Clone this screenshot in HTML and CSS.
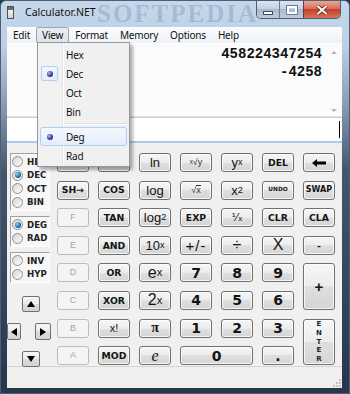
FILE: index.html
```html
<!DOCTYPE html>
<html lang="en">
<head>
    <meta charset="UTF-8">
    <title>Calculator.NET</title>
    <link rel="stylesheet" href="styles.css">
</head>
<body>
<div class="window">
    <div class="titlebar">
        <span class="app-icon"></span>
        <span class="title">Calculator.NET</span>
        <span class="watermark">SOFTPEDIA</span>
        <div class="caption">
            <span class="cap-btn cap-min"><i></i></span>
            <span class="cap-btn cap-max"><i></i></span>
            <span class="cap-btn cap-close">
                <svg width="12" height="10" viewBox="0 0 12 10"><path d="M1.5 1 L10.5 9 M10.5 1 L1.5 9" stroke="#5a2018" stroke-width="3.6"/><path d="M1.5 1 L10.5 9 M10.5 1 L1.5 9" stroke="#fff" stroke-width="2"/></svg>
            </span>
        </div>
    </div>

    <div class="client">
        <div class="menubar">
            <span class="menu-item">Edit</span>
            <span class="menu-item open">View</span>
            <span class="menu-item">Format</span>
            <span class="menu-item">Memory</span>
            <span class="menu-item">Options</span>
            <span class="menu-item">Help</span>
        </div>

        <!-- history / stack -->
        <div class="display">
            <div class="lines">
                <div>458224347254</div>
                <div>-4258</div>
            </div>
            <div class="scrollbar">
                <span class="sb-up"></span>
                <span class="sb-down"></span>
            </div>
        </div>

        <div class="entry"><span class="caret"></span></div>

        <div class="keypad">
            <div class="side">
                <div class="group">
                    <div class="radio"><span class="dot"></span>HEX</div>
                    <div class="radio"><span class="dot on"></span>DEC</div>
                    <div class="radio"><span class="dot"></span>OCT</div>
                    <div class="radio"><span class="dot"></span>BIN</div>
                </div>
                <div class="group">
                    <div class="radio"><span class="dot on"></span>DEG</div>
                    <div class="radio"><span class="dot"></span>RAD</div>
                </div>
                <div class="group">
                    <div class="radio"><span class="dot"></span>INV</div>
                    <div class="radio"><span class="dot"></span>HYP</div>
                </div>

                <div class="arrows">
                    <div class="arrow-row">
                        <button class="arrow arrow-v"><svg width="8" height="6"><polygon points="0,6 4,0 8,6" fill="#000"/></svg></button>
                    </div>
                    <div class="arrow-row arrow-mid">
                        <button class="arrow arrow-l"><svg width="6" height="8"><polygon points="6,0 0,4 6,8" fill="#000"/></svg></button>
                        <button class="arrow arrow-r"><svg width="6" height="8"><polygon points="0,0 6,4 0,8" fill="#000"/></svg></button>
                    </div>
                    <div class="arrow-row">
                        <button class="arrow arrow-v"><svg width="8" height="6"><polygon points="0,0 8,0 4,6" fill="#000"/></svg></button>
                    </div>
                </div>
            </div>

            <div class="keys">
                <!-- these two sit under the open menu -->
                <button class="key"></button>
                <button class="key"></button>
                <button class="key math">ln</button>
                <button class="key tiny-math"><sup>x</sup>&#8730;y</button>
                <button class="key math">y<sup>x</sup></button>
                <button class="key">DEL</button>
                <button class="key"><svg width="14" height="8"><polygon points="0,4 5,0 5,2.5 14,2.5 14,5.5 5,5.5 5,8" fill="#000"/></svg></button>

                <button class="key">SH&#8594;</button>
                <button class="key">COS</button>
                <button class="key math">log</button>
                <button class="key tiny-math">&#8730;<span class="over">x</span></button>
                <button class="key math">x<sup>2</sup></button>
                <button class="key undo">UNDO</button>
                <button class="key swap">SWAP</button>

                <button class="key off">F</button>
                <button class="key">TAN</button>
                <button class="key math">log<sub>2</sub></button>
                <button class="key">EXP</button>
                <button class="key frac">&#185;&#8260;&#8339;</button>
                <button class="key">CLR</button>
                <button class="key">CLA</button>

                <button class="key off">E</button>
                <button class="key">AND</button>
                <button class="key math">10<sup>x</sup></button>
                <button class="key sign">+/-</button>
                <button class="key op">&#247;</button>
                <button class="key op">X</button>
                <button class="key">-</button>

                <button class="key off">D</button>
                <button class="key">OR</button>
                <button class="key math big">e<sup>x</sup></button>
                <button class="key num">7</button>
                <button class="key num">8</button>
                <button class="key num">9</button>
                <button class="key plus">+</button>

                <button class="key off">C</button>
                <button class="key">XOR</button>
                <button class="key math big">2<sup>x</sup></button>
                <button class="key num">4</button>
                <button class="key num">5</button>
                <button class="key num">6</button>

                <button class="key off">B</button>
                <button class="key light">x!</button>
                <button class="key pi">&#960;</button>
                <button class="key num">1</button>
                <button class="key num">2</button>
                <button class="key num">3</button>
                <button class="key enter">E<br>N<br>T<br>E<br>R</button>

                <button class="key off">A</button>
                <button class="key">MOD</button>
                <button class="key euler">e</button>
                <button class="key num zero">0</button>
                <button class="key num">.</button>
            </div>
        </div>

        <div class="statusbar">
            <svg class="grip" width="9" height="9">
                <rect x="7" y="1" width="2" height="2" fill="#c4c4c4"/>
                <rect x="4" y="4" width="2" height="2" fill="#c4c4c4"/>
                <rect x="7" y="4" width="2" height="2" fill="#c4c4c4"/>
                <rect x="1" y="7" width="2" height="2" fill="#c4c4c4"/>
                <rect x="4" y="7" width="2" height="2" fill="#c4c4c4"/>
                <rect x="7" y="7" width="2" height="2" fill="#c4c4c4"/>
            </svg>
        </div>
    </div>

    <!-- open View menu -->
    <div class="dropdown">
        <div class="mi"><span class="chk"></span>Hex</div>
        <div class="mi"><span class="chk checked"><i></i></span>Dec</div>
        <div class="mi"><span class="chk"></span>Oct</div>
        <div class="mi"><span class="chk"></span>Bin</div>
        <div class="msep"></div>
        <div class="mi hot"><span class="chk"><i></i></span>Deg</div>
        <div class="mi"><span class="chk"></span>Rad</div>
    </div>
</div>
</body>
</html>
```

FILE: styles.css
```css
* {
    box-sizing: border-box;
}
body {
    margin: 0;
    width: 350px;
    height: 394px;
    overflow: hidden;
    background: #26354a;
    font-family: "Noto Sans", "Liberation Sans", sans-serif;
}
.window {
    position: relative;
    width: 350px;
    height: 394px;
    display: flex;
    flex-direction: column;
    padding: 0 7px 5px 6px;
    border: 1px solid #4d5f74;
    border-radius: 6px 6px 0 0;
    background: linear-gradient(#c6d7ea 0, #bccfe4 45px, #8d9fb4 100px, #44566b 170px, #27364a 394px);
}

/* title bar */
.titlebar {
    position: relative;
    height: 26px;
    display: flex;
    align-items: flex-start;
}
.app-icon {
    width: 7px;
    height: 13px;
    margin-top: 5px;
    border: 1px solid #505050;
    background: linear-gradient(#6b6b6b 0 3px, #f4f4f4 3px, #d0d0d0);
}
.title {
    margin: 4px 0 0 11px;
    font-size: 10.5px;
    color: #111;
}
.watermark {
    position: absolute;
    left: 90px;
    top: 0;
    font-family: "Liberation Serif", serif;
    font-weight: bold;
    font-size: 25px;
    line-height: 1;
    letter-spacing: 2px;
    color: rgba(60, 95, 140, 0.24);
}
.caption {
    position: relative;
    margin: 0 1px 0 auto;
    display: flex;
    border: 1px solid #4f5f73;
    border-top: none;
    border-radius: 0 0 5px 5px;
    overflow: hidden;
    height: 18px;
}
.cap-btn {
    display: flex;
    align-items: center;
    justify-content: center;
    width: 23px;
    background: linear-gradient(#dbe5f0, #c3d2e3 45%, #a9bbd0 50%, #bccbdc);
}
.cap-min {
    border-right: 1px solid #6a7a8e;
}
.cap-min i {
    width: 10px;
    height: 4px;
    margin-top: 6px;
    background: #fff;
    border: 1px solid #3f4c5c;
}
.cap-max i {
    width: 10px;
    height: 8px;
    border: 2px solid #fff;
    outline: 1px solid #6e7e92;
}
.cap-close {
    width: 37px;
    border-left: 1px solid #6b3a30;
    background: linear-gradient(#eaa796, #d8705a 45%, #c2412b 50%, #d8735d);
}

/* client area */
.client {
    flex: 1;
    display: flex;
    flex-direction: column;
    background: #f0f0f0;
}
.menubar {
    height: 16px;
    display: flex;
    background: linear-gradient(#fbfcfe, #eef2f8);
    font-size: 10px;
    letter-spacing: -0.2px;
}
.menu-item {
    padding: 0 5px;
    line-height: 15px;
    color: #111;
    border: 1px solid transparent;
}
.menu-item.open {
    border: 1px solid #9aa4b2;
    border-radius: 2px;
    background: linear-gradient(#e9edf2, #dfe4ea);
}
.display {
    height: 74px;
    display: flex;
    background: #fbfbfb;
}
.lines {
    flex: 1;
    padding: 2px 3px 0 0;
    text-align: right;
    font-family: "Liberation Mono", monospace;
    font-weight: bold;
    font-size: 14px;
    line-height: 18px;
    color: #111;
}
.scrollbar {
    width: 17px;
    display: flex;
    flex-direction: column;
    justify-content: space-between;
    align-items: center;
    padding: 8px 0 5px;
}
.sb-up {
    border: 3px solid transparent;
    border-top: none;
    border-bottom: 3px solid #b5b5b5;
}
.sb-down {
    border: 3px solid transparent;
    border-bottom: none;
    border-top: 3px solid #b5b5b5;
}
.entry {
    height: 26px;
    display: flex;
    justify-content: flex-end;
    align-items: center;
    background: #fff;
    border-top: 1px solid #c9cbd0;
    border-bottom: 2px solid #a9cdef;
    box-shadow: 0 -1px 0 #e4e4e4;
}
.caret {
    width: 1.5px;
    height: 17px;
    margin-right: 2px;
    background: #000;
}

/* keypad */
.keypad {
    height: 224px;
    display: flex;
    gap: 5px;
    padding-top: 10px;
    border-bottom: 1px solid #d4d4d4;
}
.side {
    width: 45px;
    display: flex;
    flex-direction: column;
}
.group {
    width: 40px;
    margin: 0 0 5px 3px;
    padding: 1px 0;
    border: 1px solid #fff;
    border-top-color: #a0a0a0;
    border-left-color: #a0a0a0;
    background: #f7f7f7;
}
.radio {
    height: 13.5px;
    display: flex;
    align-items: center;
    gap: 4px;
    padding-left: 1px;
    font-family: "DejaVu Sans", sans-serif;
    font-weight: bold;
    font-size: 8.6px;
    color: #222;
}
.dot {
    width: 11px;
    height: 11px;
    border-radius: 50%;
    border: 1px solid #8e8f8f;
    background: linear-gradient(135deg, #d6d6d6, #fbfbfb);
    display: flex;
    align-items: center;
    justify-content: center;
}
.dot.on::after {
    content: "";
    width: 6px;
    height: 6px;
    border-radius: 50%;
    background: radial-gradient(circle at 35% 35%, #8fd0f5, #1c6aa8 60%, #0e3f6e);
}
.arrows {
    margin-top: 8px;
    display: flex;
    flex-direction: column;
    gap: 11px;
}
.arrow-row {
    display: flex;
}
.arrow {
    display: flex;
    align-items: center;
    justify-content: center;
    padding: 0;
    border: 1px solid #707070;
    border-radius: 2px;
    background: linear-gradient(#f6f6f6, #ebebeb 50%, #dddddd 50%, #d3d3d3);
}
.arrow-v {
    width: 18px;
    height: 16px;
    margin-left: 15px;
}
.arrow-l {
    width: 14px;
    height: 17px;
}
.arrow-r {
    width: 16px;
    height: 17px;
    margin-left: 14px;
}
.keys {
    display: grid;
    grid-template-columns: repeat(7, 32px);
    grid-auto-rows: 19px;
    column-gap: 9px;
    row-gap: 8.6px;
}
.key {
    display: flex;
    align-items: center;
    justify-content: center;
    padding: 0;
    border: 1px solid #707070;
    border-radius: 3px;
    background: linear-gradient(#f6f6f6, #ececec 50%, #dfdfdf 50%, #d5d5d5);
    box-shadow: inset 0 0 0 1px rgba(255, 255, 255, 0.75);
    font-family: "DejaVu Sans", sans-serif;
    font-weight: bold;
    font-size: 9.3px;
    color: #141414;
    line-height: 1;
}
.key sup {
    font-size: 0.7em;
    vertical-align: 0.45em;
}
.key sub {
    font-size: 0.7em;
    vertical-align: -0.1em;
}
.key.off {
    border-color: #bcbcbc;
    background: #f4f4f4;
    box-shadow: none;
    font-family: "Liberation Sans", sans-serif;
    font-weight: normal;
    font-size: 9px;
    color: #a6a6a6;
}
.key.math {
    font-family: "Liberation Sans", sans-serif;
    font-weight: normal;
    font-size: 13px;
}
.key.math.big {
    font-size: 16px;
}
.key.tiny-math {
    font-family: "Liberation Sans", sans-serif;
    font-weight: normal;
    font-size: 9px;
    color: #333;
}
.over {
    border-top: 1px solid #333;
}
.key.undo {
    font-size: 5.8px;
}
.key.swap {
    font-size: 8px;
}
.key.frac {
    font-weight: normal;
    font-size: 11px;
}
.key.sign {
    font-family: "Liberation Sans", sans-serif;
    font-weight: normal;
    font-size: 15px;
    letter-spacing: 1px;
}
.key.op {
    font-family: "Liberation Sans", sans-serif;
    font-weight: normal;
    font-size: 16px;
}
.key.num {
    font-size: 14px;
}
.key.light {
    font-family: "Liberation Sans", sans-serif;
    font-weight: normal;
    font-size: 11px;
}
.key.pi {
    font-family: "Liberation Serif", serif;
    font-size: 14px;
}
.key.euler {
    font-family: "Liberation Serif", serif;
    font-style: italic;
    font-weight: normal;
    font-size: 16px;
}
.key.plus {
    grid-row: span 2;
    font-family: "Liberation Sans", sans-serif;
    font-size: 15px;
}
.key.enter {
    grid-row: span 2;
    font-size: 7px;
    line-height: 8.6px;
    color: #1a1f3a;
}
.key.zero {
    grid-column: span 2;
}
.statusbar {
    flex: 1;
    display: flex;
    justify-content: flex-end;
    align-items: flex-end;
    padding: 0 1px 1px 0;
    background: #efefee;
}

/* View menu */
.dropdown {
    position: absolute;
    left: 36px;
    top: 41px;
    width: 93px;
    height: 125px;
    padding: 2px 2px 1px;
    border: 1px solid #979797;
    background: linear-gradient(to right, #f1f1f1 24px, #e2e3e3 24px 25px, #fff 25px 26px, #f0f0f0 26px);
    box-shadow: 3px 3px 3px rgba(0, 0, 0, 0.3);
    font-size: 10px;
    letter-spacing: -0.2px;
    color: #111;
}
.mi {
    height: 19px;
    display: flex;
    align-items: center;
    border: 1px solid transparent;
    border-radius: 3px;
}
.mi.hot {
    border-color: #aecff7;
    background: linear-gradient(#f4f8fd, #e3edfa);
}
.chk {
    width: 17px;
    height: 15px;
    margin-right: 8px;
    display: flex;
    align-items: center;
    justify-content: center;
    border: 1px solid transparent;
    border-radius: 2px;
}
.chk.checked {
    border-color: #aecff7;
    background: linear-gradient(#f2f7fd, #e1ecfa);
}
.chk i {
    width: 6px;
    height: 6px;
    border-radius: 50%;
    background: radial-gradient(circle at 35% 35%, #b9b9f2, #3a3aa6 55%, #14145a);
}
.msep {
    height: 6px;
    margin-left: 26px;
    background: linear-gradient(transparent 2px, #e0e0e0 2px 3px, #fff 3px 4px, transparent 4px);
}
```
